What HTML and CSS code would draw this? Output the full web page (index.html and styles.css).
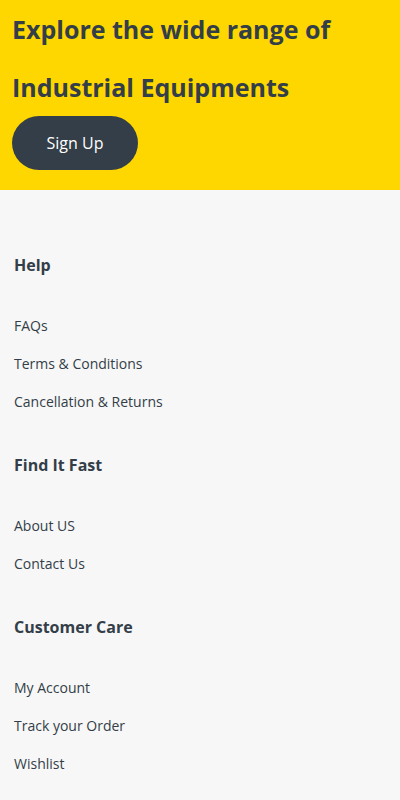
FILE: index.html
```html
<!DOCTYPE html>
<html>
<head>
<meta charset="utf-8">
<link rel="stylesheet" href="styles.css">
</head>
<body>
<section class="hero">
  <h1 class="hero-title">Explore the wide range of<br>Industrial Equipments</h1>
  <a class="btn" href="#">Sign Up</a>
</section>
<footer class="links">
  <div class="group">
    <h2 class="group-title">Help</h2>
    <ul class="list">
      <li><a href="#">FAQs</a></li>
      <li><a href="#">Terms &amp; Conditions</a></li>
      <li><a href="#">Cancellation &amp; Returns</a></li>
    </ul>
  </div>
  <div class="group">
    <h2 class="group-title">Find It Fast</h2>
    <ul class="list">
      <li><a href="#">About US</a></li>
      <li><a href="#">Contact Us</a></li>
    </ul>
  </div>
  <div class="group">
    <h2 class="group-title">Customer Care</h2>
    <ul class="list">
      <li><a href="#">My Account</a></li>
      <li><a href="#">Track your Order</a></li>
      <li><a href="#">Wishlist</a></li>
    </ul>
  </div>
</footer>
</body>
</html>
```
FILE: styles.css
```css
* { box-sizing: border-box; }
html, body { margin: 0; padding: 0; }
body {
  font-family: "Open Sans", "Liberation Sans", sans-serif;
  background: #f7f7f7;
  color: #333e48;
}
.hero {
  background: #fed700;
  padding: 0 12px 20px 12px;
}
.hero-title {
  margin: 0;
  font-size: 25px;
  line-height: 58px;
  font-weight: 700;
  color: #333e48;
}
.btn {
  display: inline-flex;
  align-items: center;
  justify-content: center;
  width: 126px;
  height: 54px;
  border-radius: 27px;
  background: #333e48;
  color: #fff;
  font-size: 16px;
  text-decoration: none;
}
.links {
  padding: 63px 14px 20px 14px;
}
.group-title {
  margin: 0 0 30px 0;
  font-size: 16px;
  line-height: 24px;
  font-weight: 700;
  color: #333e48;
}
.list {
  list-style: none;
  margin: 0 0 32px 0;
  padding: 0;
}
.list li {
  height: 38px;
  display: flex;
  align-items: center;
  padding-bottom: 2px;
}
.list a {
  font-size: 14px;
  color: #333e48;
  text-decoration: none;
}
```
